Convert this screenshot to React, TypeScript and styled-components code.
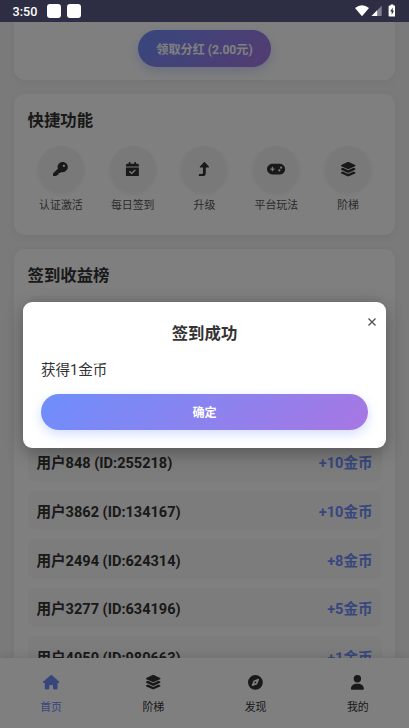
import React from 'react';
import styled, { createGlobalStyle } from 'styled-components';
import {
  FaKey,
  FaCalendarCheck,
  FaTurnUp,
  FaGamepad,
  FaLayerGroup,
  FaHouse,
  FaCompass,
  FaUser,
} from 'react-icons/fa6';

const GlobalStyle = createGlobalStyle`
  * { box-sizing: border-box; }
  html, body, #root { height: 100%; }
  body {
    margin: 0;
    overflow: hidden;
    font-family: Roboto, "Noto Sans CJK SC", sans-serif;
    color: #333;
  }
`;

const Screen = styled.div`
  position: relative;
  display: flex;
  flex-direction: column;
  height: 728px;
  overflow: hidden;
  background: #f4f4f4;
`;

const StatusBar = styled.header`
  position: relative;
  z-index: 3;
  flex: none;
  display: flex;
  align-items: center;
  height: 22px;
  padding: 0 14px 0 12.5px;
  background: #2d2d44;
  color: #fff;
`;

const Clock = styled.span`
  width: 34.5px;
  font-size: 12.6px;
  font-weight: 500;
  line-height: 22px;
  padding-top: 1px;
`;

const Notice = styled.span`
  width: 14px;
  height: 14px;
  margin-right: 6px;
  border-radius: 3px;
  background: #fff;
`;

const StatusIcons = styled.svg`
  margin-left: auto;
  display: block;
`;

const Content = styled.main`
  flex: 1;
  min-height: 0;
  overflow: hidden;
  padding: 0 14px;
  display: flex;
  flex-direction: column;
`;

const Card = styled.section<{ $height: number; $top?: boolean }>`
  flex: none;
  height: ${(p) => p.$height}px;
  margin-bottom: 14px;
  padding: ${(p) => (p.$top ? '8px' : '15px')} 13.5px 0;
  border-radius: ${(p) => (p.$top ? '0 0 11px 11px' : '11px')};
  background: #fff;
  box-shadow: 0 2px 9px rgba(0, 0, 0, 0.05);
`;

const GradientButton = styled.button<{ $wide?: boolean }>`
  display: block;
  width: ${(p) => (p.$wide ? '100%' : '133px')};
  height: ${(p) => (p.$wide ? '36px' : '37px')};
  margin: 0 auto;
  padding: ${(p) => (p.$wide ? '2px' : '3px')} 0 0;
  border: 0;
  border-radius: 19px;
  background: linear-gradient(135deg, #6e8efb, #a777e3);
  box-shadow: 0 4px 11px rgba(110, 142, 251, 0.3);
  color: #fff;
  font: 700 12.1px/34px Roboto, "Noto Sans CJK SC", sans-serif;
`;

const Heading = styled.h2`
  margin: 0;
  font-size: 16.4px;
  font-weight: 700;
  line-height: 24px;
`;

const Shortcuts = styled.div`
  display: grid;
  grid-template-columns: repeat(5, 1fr);
  width: 359px;
  margin: 13px -2.5px 0;
`;

const Shortcut = styled.div`
  display: flex;
  flex-direction: column;
  align-items: center;
  font-size: 10.9px;
  line-height: 16px;
  white-space: nowrap;
  color: #555;
`;

const Disc = styled.div`
  display: flex;
  align-items: center;
  justify-content: center;
  width: 46px;
  height: 46px;
  margin-bottom: 6px;
  border-radius: 50%;
  background: #f3f3f3;
  box-shadow: 0 2px 5px rgba(0, 0, 0, 0.07);
  color: #333;
  font-size: 14.8px;
`;

const Ranking = styled.div`
  display: flex;
  flex-direction: column;
  gap: 9.1px;
  margin-top: 8.3px;
`;

const RankRow = styled.div`
  display: flex;
  justify-content: space-between;
  align-items: center;
  height: 39.5px;
  padding: 0 9px;
  border-radius: 7px;
  background: #f8f8f8;
  font-size: 14.55px;
  font-weight: 700;
`;

const Reward = styled.span`
  color: #6e8efb;
`;

const TabBar = styled.nav`
  flex: none;
  position: relative;
  display: grid;
  grid-template-columns: repeat(4, 1fr);
  height: 70px;
  background: #fff;
  box-shadow: 0 -2px 9px rgba(0, 0, 0, 0.1);
`;

const Tab = styled.div<{ $active?: boolean }>`
  display: flex;
  flex-direction: column;
  align-items: center;
  padding-top: 16px;
  font-size: 10.9px;
  line-height: 16px;
  color: ${(p) => (p.$active ? '#6e8efb' : '#333')};
`;

const TabIcon = styled.span`
  display: flex;
  align-items: center;
  height: 17px;
  margin-bottom: 9px;
  font-size: 14.8px;
`;

const Overlay = styled.div`
  position: absolute;
  inset: 22px 0 0;
  z-index: 2;
  display: flex;
  justify-content: center;
  align-items: center;
  background: rgba(0, 0, 0, 0.5);
`;

const Dialog = styled.div`
  position: relative;
  width: 363px;
  height: 146px;
  padding: 19.5px 18px 0;
  border-radius: 9px;
  background: #fff;
  box-shadow: 0 5px 18px rgba(0, 0, 0, 0.3);
`;

const DialogTitle = styled(Heading)`
  text-align: center;
`;

const Message = styled.p`
  margin: 14px 0 12.5px;
  font-size: 14.55px;
  line-height: 22px;
`;

const Close = styled.svg`
  position: absolute;
  top: 16px;
  right: 10px;
`;

const shortcuts = [
  { label: '认证激活', icon: <FaKey /> },
  { label: '每日签到', icon: <FaCalendarCheck /> },
  { label: '升级', icon: <FaTurnUp /> },
  { label: '平台玩法', icon: <FaGamepad size={18.2} /> },
  { label: '阶梯', icon: <FaLayerGroup size={16.4} /> },
];

const ranking = [
  { user: '', reward: '' },
  { user: '', reward: '' },
  { user: '', reward: '' },
  { user: '用户848 (ID:255218)', reward: '+10金币' },
  { user: '用户3862 (ID:134167)', reward: '+10金币' },
  { user: '用户2494 (ID:624314)', reward: '+8金币' },
  { user: '用户3277 (ID:634196)', reward: '+5金币' },
  { user: '用户4950 (ID:980663)', reward: '+1金币' },
];

const tabs = [
  { label: '首页', icon: <FaHouse size={16.4} />, active: true },
  { label: '阶梯', icon: <FaLayerGroup size={16.4} /> },
  { label: '发现', icon: <FaCompass /> },
  { label: '我的', icon: <FaUser /> },
];

export default function App() {
  return (
    <>
      <GlobalStyle />
      <Screen>
        <StatusBar>
          <Clock>3:50</Clock>
          <Notice />
          <Notice />
          <StatusIcons width="41" height="14" viewBox="0 0 41 14" fill="#fff">
            <path d="M0 4Q7 -1.6 14 4L7 12.2Z" transform="translate(1 0)" />
            <path d="M17.5 12L27.7 1.8V12Z" opacity=".4" />
            <path d="M17.5 12L23.2 6.3V12Z" />
            <path
              transform="translate(1 0)"
              fillRule="evenodd"
              d="M35.6 1.6V.5h2.8v1.1h1q1 0 1 1v9q0 1-1 1h-4.8q-1 0-1-1v-9q0-1 1-1ZM37.7 3.6L35.2 7.6h1.5v3.2L39 6.7h-1.3Z"
            />
          </StatusIcons>
        </StatusBar>
        <Content>
          <Card $height={58} $top>
            <GradientButton>领取分红 (2.00元)</GradientButton>
          </Card>
          <Card $height={141}>
            <Heading>快捷功能</Heading>
            <Shortcuts>
              {shortcuts.map((s) => (
                <Shortcut key={s.label}>
                  <Disc>{s.icon}</Disc>
                  {s.label}
                </Shortcut>
              ))}
            </Shortcuts>
          </Card>
          <Card $height={450}>
            <Heading>签到收益榜</Heading>
            <Ranking>
              {ranking.map((r, i) => (
                <RankRow key={i}>
                  <span>{r.user}</span>
                  <Reward>{r.reward}</Reward>
                </RankRow>
              ))}
            </Ranking>
          </Card>
        </Content>
        <TabBar>
          {tabs.map((t) => (
            <Tab key={t.label} $active={t.active}>
              <TabIcon>{t.icon}</TabIcon>
              {t.label}
            </Tab>
          ))}
        </TabBar>
        <Overlay>
          <Dialog>
            <Close width="8" height="8" viewBox="0 0 8 8" stroke="#555" strokeWidth="1.4">
              <path d="M.5.5L7.5 7.5M7.5.5L.5 7.5" />
            </Close>
            <DialogTitle>签到成功</DialogTitle>
            <Message>获得1金币</Message>
            <GradientButton $wide>确定</GradientButton>
          </Dialog>
        </Overlay>
      </Screen>
    </>
  );
}
